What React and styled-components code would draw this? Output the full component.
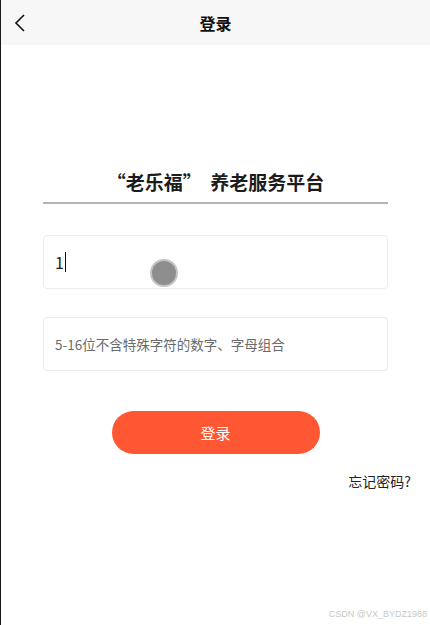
import React from "react";
import styled, { createGlobalStyle } from "styled-components";

const Global = createGlobalStyle`
  html, body { margin: 0; padding: 0; background: #fff; }
  body { font-family: "Noto Sans CJK SC", "Noto Sans", sans-serif; }
  * { box-sizing: border-box; }
`;

const Page = styled.div`
  position: relative;
  width: 430px;
  height: 625px;
  border-left: 1px solid #1a1a1a;
  background: #fff;
  display: flex;
  flex-direction: column;
  overflow: hidden;
`;

const Header = styled.header`
  height: 45px;
  background: #f7f7f7;
  display: grid;
  grid-template-columns: 60px 1fr 60px;
  align-items: center;
`;

const Back = styled.button`
  border: 0;
  background: none;
  padding: 0 0 0 12px;
  height: 45px;
  display: flex;
  align-items: center;
  cursor: pointer;
`;

const Title = styled.h1`
  margin: 0;
  text-align: center;
  font-size: 16px;
  font-weight: 700;
  color: #111;
`;

const Content = styled.main`
  padding: 0 42px;
  display: flex;
  flex-direction: column;
`;

const Heading = styled.h2`
  margin: 123px 0 0;
  padding-bottom: 6px;
  border-bottom: 2px solid #b4b4b4;
  text-align: center;
  font-size: 19px;
  line-height: 28px;
  font-weight: 700;
  color: #1c1c1c;
`;

const Field = styled.div`
  position: relative;
  height: 54px;
  margin-top: ${(p) => p.$mt}px;
  border: 1px solid #ececec;
  border-radius: 4px;
  display: flex;
  align-items: center;
  padding-left: 11px;
  font-size: ${(p) => (p.$placeholder ? 13.5 : 16)}px;
  color: ${(p) => (p.$placeholder ? "#6b6b6b" : "#222")};
`;

const Caret = styled.span`
  display: inline-block;
  width: 1px;
  height: 20px;
  background: #111;
  margin-left: 1px;
`;

const Touch = styled.span`
  position: absolute;
  left: 108px;
  top: 25px;
  width: 24px;
  height: 24px;
  border-radius: 50%;
  background: #8d8d8d;
  box-shadow: 0 0 0 2px #c4c4c4;
`;

const LoginButton = styled.button`
  align-self: center;
  margin-top: 40px;
  width: 208px;
  height: 43px;
  border: 0;
  border-radius: 22px;
  background: #ff5733;
  color: #fff;
  font-family: inherit;
  font-size: 15px;
  cursor: pointer;
`;

const Forgot = styled.a`
  align-self: flex-end;
  margin: 17px -23px 0 0;
  font-size: 14px;
  color: #222;
  text-decoration: none;
`;

const Watermark = styled.span`
  position: absolute;
  right: 3px;
  bottom: 6px;
  font-family: "Liberation Sans", Arial, sans-serif;
  font-size: 9px;
  color: #c8c8c8;
`;

export default function App() {
  return (
    <>
      <Global />
      <Page>
        <Header>
          <Back aria-label="返回">
            <svg width="14" height="20" viewBox="0 0 14 20">
              <path d="M11 2 L3 10 L11 18" fill="none" stroke="#111" strokeWidth="1.6" />
            </svg>
          </Back>
          <Title>登录</Title>
          <span />
        </Header>
        <Content>
          <Heading>“老乐福”&nbsp; 养老服务平台</Heading>
          <Field $mt={31}>
            1<Caret />
            <Touch />
          </Field>
          <Field $mt={28} $placeholder>
            5-16位不含特殊字符的数字、字母组合
          </Field>
          <LoginButton>登录</LoginButton>
          <Forgot href="#">忘记密码?</Forgot>
        </Content>
        <Watermark>CSDN @VX_BYDZ1988</Watermark>
      </Page>
    </>
  );
}
